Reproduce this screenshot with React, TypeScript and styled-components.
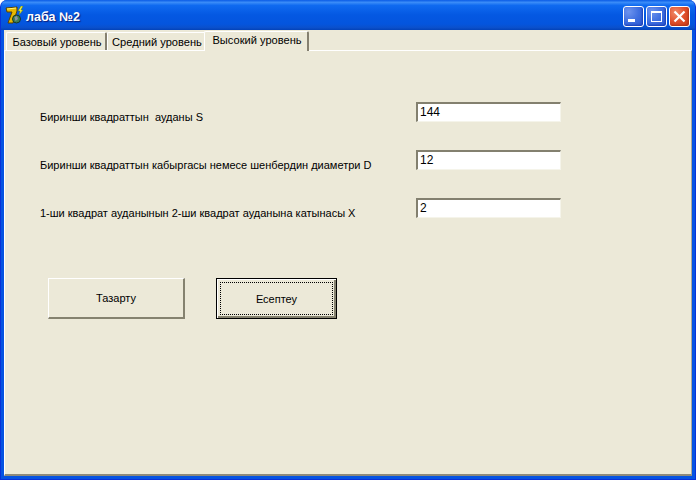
import React from 'react';
import styled, { createGlobalStyle } from 'styled-components';

const GlobalStyle = createGlobalStyle`
  html, body {
    margin: 0;
    padding: 0;
    background: #fff;
  }
`;

const tabs = [
  { label: 'Базовый уровень', width: 101 },
  { label: 'Средний уровень', width: 99 },
  { label: 'Высокий уровень', width: 105, active: true },
];

const fields = [
  { label: 'Биринши квадраттын  ауданы S', value: '144' },
  { label: 'Биринши квадраттын кабыргасы немесе шенбердин диаметри D', value: '12' },
  { label: '1-ши квадрат ауданынын 2-ши квадрат ауданына катынасы X', value: '2' },
];

function AppIcon() {
  return (
    <svg width="20" height="20" viewBox="0 0 20 20">
      <path d="M1 2 L12 1 L12 5 L8 17 L3 17 L7 6 L2 6 Z" fill="#e8b800" stroke="#5a4300" strokeWidth="1" />
      <path d="M2 3 L11 2" stroke="#fff27a" strokeWidth="1" />
      <circle cx="11.5" cy="13" r="4" fill="#3f7f52" stroke="#17352a" strokeWidth="1" />
      <path d="M9.5 11 L12 10 L13 13 L10.5 15 Z" fill="#8a94a8" />
      <path d="M16 0 L13 5 L15 5 L14 9 L18 4 L16 4 L18 0 Z" fill="#f5ee3a" stroke="#5b7a12" strokeWidth="0.5" />
    </svg>
  );
}

export default function App() {
  return (
    <>
      <GlobalStyle />
      <Window>
        <TitleBar>
          <AppIcon />
          <TitleText>лаба №2</TitleText>
          <Controls>
            <ControlButton aria-label="Свернуть">
              <svg width="21" height="21" viewBox="0 0 21 21">
                <rect x="5" y="13" width="7" height="3" fill="#fff" />
              </svg>
            </ControlButton>
            <ControlButton aria-label="Развернуть">
              <svg width="21" height="21" viewBox="0 0 21 21">
                <rect x="5.5" y="5.5" width="10" height="10" fill="none" stroke="#fff" />
                <rect x="5" y="5" width="11" height="2" fill="#fff" />
              </svg>
            </ControlButton>
            <ControlButton $close aria-label="Закрыть">
              <svg width="21" height="21" viewBox="0 0 21 21">
                <path d="M5.5 5.5 L15.5 15.5 M15.5 5.5 L5.5 15.5" stroke="#fff" strokeWidth="2.2" />
              </svg>
            </ControlButton>
          </Controls>
        </TitleBar>
        <Client>
          <TabStrip>
            {tabs.map((t) => (
              <Tab key={t.label} $active={t.active} $width={t.width}>
                {t.label}
              </Tab>
            ))}
          </TabStrip>
          <Page>
            <Form>
              {fields.map((f) => (
                <Row key={f.value}>
                  <FieldLabel>{f.label}</FieldLabel>
                  <FieldInput readOnly value={f.value} />
                </Row>
              ))}
            </Form>
            <Buttons>
              <PushButton>Тазарту</PushButton>
              <PushButton $default>Есептеу</PushButton>
            </Buttons>
          </Page>
        </Client>
      </Window>
    </>
  );
}

const Window = styled.div`
  width: 696px;
  height: 480px;
  box-sizing: border-box;
  display: flex;
  flex-direction: column;
  padding: 0 3px 3px;
  background: #0553e2;
  border-left: 1px solid #0831d9;
  border-right: 1px solid #0831d9;
  border-bottom: 1px solid #0831d9;
  border-radius: 7px 7px 0 0;
  overflow: hidden;
`;

const TitleBar = styled.div`
  height: 30px;
  box-sizing: border-box;
  flex: none;
  margin: 0 -3px;
  padding: 2px 5px 0 4px;
  display: flex;
  align-items: center;
  background: linear-gradient(
    180deg,
    #0a5be6 0%,
    #3a8cf8 8%,
    #0f6af0 18%,
    #0458e2 50%,
    #0455de 80%,
    #0a50cc 92%,
    #0342b8 100%
  );
`;

const TitleText = styled.span`
  margin-left: 1px;
  padding-top: 1px;
  font-family: "Liberation Sans", Arial, sans-serif;
  font-size: 12.5px;
  font-weight: 700;
  color: #fff;
  text-shadow: 1px 1px 1px #0f1f7a;
`;

const Controls = styled.div`
  margin-left: auto;
  display: flex;
  gap: 2px;
`;

const ControlButton = styled.div<{ $close?: boolean }>`
  width: 21px;
  height: 21px;
  box-sizing: border-box;
  border: 1px solid #fff;
  border-radius: 3px;
  display: flex;
  box-shadow: inset -1px -1px 2px ${(p) => (p.$close ? '#b23318' : '#1a3fb8')};
  background: ${(p) =>
    p.$close
      ? 'radial-gradient(circle at 30% 30%, #f08a6a 0%, #e0502c 50%, #c93a14 100%)'
      : 'radial-gradient(circle at 25% 25%, #6d93ee 0%, #3f6fe0 50%, #2a55cf 100%)'};

  svg {
    margin: -1px;
    flex: none;
  }
`;

const Client = styled.div`
  flex: 1;
  min-height: 0;
  display: flex;
  flex-direction: column;
  background: #ece9d8;
  font-family: "Liberation Sans", Arial, sans-serif;
  font-size: 11px;
  color: #000;
`;

const TabStrip = styled.div`
  height: 20px;
  flex: none;
  padding-left: 2px;
  display: flex;
  align-items: flex-end;
  background: #ece9d8;
  position: relative;
`;

const Tab = styled.div<{ $active?: boolean; $width: number }>`
  width: ${(p) => p.$width}px;
  box-sizing: border-box;
  height: ${(p) => (p.$active ? 20 : 18)}px;
  padding-top: ${(p) => (p.$active ? 2 : 3)}px;
  padding-left: 2px;
  margin-left: ${(p) => (p.$active ? -2 : 0)}px;
  margin-bottom: ${(p) => (p.$active ? -1 : 0)}px;
  text-align: center;
  white-space: nowrap;
  font-size: 11.1px;
  line-height: 13px;
  border-top: 1px solid #fff;
  border-left: 1px solid #fff;
  border-right: 2px solid #858070;
  border-radius: 2px 2px 0 0;
  background: #ece9d8;
  position: relative;
  z-index: ${(p) => (p.$active ? 1 : 0)};
`;

const Page = styled.div`
  flex: 1;
  min-height: 0;
  display: flex;
  flex-direction: column;
  box-sizing: border-box;
  border-top: 1px solid #fff;
  border-left: 1px solid #fff;
  border-right: 1px solid #aca899;
  border-bottom: 2px solid #8d8a7c;
  padding: 51px 0 0 35px;
`;

const Form = styled.div`
  display: flex;
  flex-direction: column;
  gap: 28px;
`;

const Row = styled.div`
  display: flex;
  height: 20px;
`;

const FieldLabel = styled.label`
  width: 376px;
  flex: none;
  padding-top: 9px;
  white-space: pre;
  line-height: 13px;
`;

const FieldInput = styled.input`
  width: 145px;
  height: 20px;
  box-sizing: border-box;
  padding: 0 0 1px 2px;
  margin: 0;
  background: #fff;
  font-family: "Liberation Sans", Arial, sans-serif;
  font-size: 12px;
  color: #000;
  outline: none;
  border-style: solid;
  border-width: 2px 1px 1px 2px;
  border-color: #83806f #f5f4ea #f5f4ea #83806f;
`;

const Buttons = styled.div`
  margin-top: 60px;
  margin-left: 8px;
  display: flex;
  gap: 31px;
`;

const PushButton = styled.button<{ $default?: boolean }>`
  width: ${(p) => (p.$default ? 121 : 137)}px;
  height: 41px;
  box-sizing: border-box;
  padding: 0;
  margin: 0;
  position: relative;
  background: #ece9d8;
  font-family: "Liberation Sans", Arial, sans-serif;
  font-size: 11px;
  color: #000;
  border-style: solid;
  border-width: ${(p) => (p.$default ? '1px' : '1px 2px 2px 1px')};
  border-color: ${(p) => (p.$default ? '#000' : '#fff #85826f #85826f #fff')};
  box-shadow: ${(p) => (p.$default ? 'inset 1px 1px 0 #fff, inset -2px -2px 0 #85826f' : 'none')};

  &::after {
    content: '';
    display: ${(p) => (p.$default ? 'block' : 'none')};
    position: absolute;
    inset: 3px;
    border: 1px dotted #000;
  }
`;
